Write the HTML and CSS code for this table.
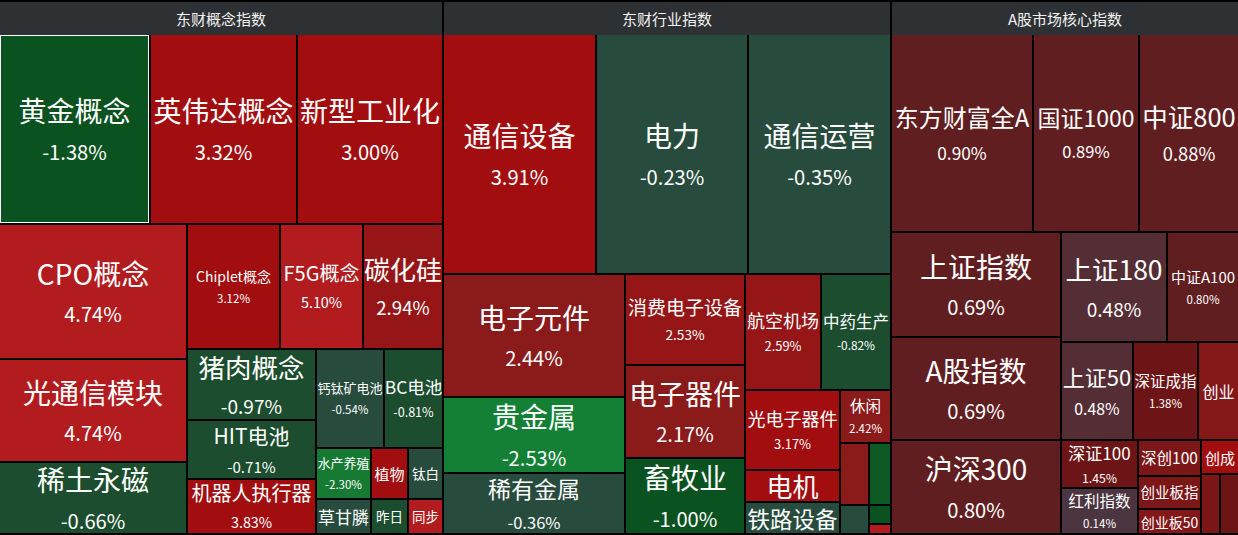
FILE: index.html
```html
<!DOCTYPE html>
<html lang="zh-CN">
<head>
<meta charset="utf-8">
<title>板块热力图</title>
<link rel="stylesheet" href="styles.css">
</head>
<body>
<div class="board">
  <section class="sec s1">
    <div class="hd">东财概念指数</div>
    <div class="col body">
      <div class="row" style="height:190px">
        <div class="t g1 sel" style="width:151px;font-size:28px"><div class="n">黄金概念</div><div class="p">-1.38%</div></div>
        <div class="t r1" style="width:147px;font-size:28px"><div class="n">英伟达概念</div><div class="p">3.32%</div></div>
        <div class="t r1 fill" style="font-size:28px"><div class="n">新型工业化</div><div class="p">3.00%</div></div>
      </div>
      <div class="row fill">
        <div class="col" style="width:188px">
          <div class="t r2" style="height:135px;font-size:28px"><div class="n">CPO概念</div><div class="p">4.74%</div></div>
          <div class="t r2" style="height:103px;font-size:28px"><div class="n">光通信模块</div><div class="p">4.74%</div></div>
          <div class="t g2 fill" style="font-size:28px"><div class="n">稀土永磁</div><div class="p">-0.66%</div></div>
        </div>
        <div class="col fill">
          <div class="row" style="height:125px">
            <div class="t r1" style="width:93px;font-size:14px"><div class="n">Chiplet概念</div><div class="p">3.12%</div></div>
            <div class="t r2" style="width:83px;font-size:20px"><div class="n">F5G概念</div><div class="p">5.10%</div></div>
            <div class="t r3 fill" style="font-size:26px"><div class="n">碳化硅</div><div class="p">2.94%</div></div>
          </div>
          <div class="row fill">
            <div class="col" style="width:129px">
              <div class="t g2" style="height:71px;font-size:26.5px"><div class="n">猪肉概念</div><div class="p">-0.97%</div></div>
              <div class="t g2" style="height:59px;font-size:21px"><div class="n">HIT电池</div><div class="p">-0.71%</div></div>
              <div class="t r1 fill" style="font-size:20px"><div class="n">机器人执行器</div><div class="p">3.83%</div></div>
            </div>
            <div class="col fill">
              <div class="row" style="height:99px">
                <div class="t g3" style="width:68px;font-size:13px"><div class="n">钙钛矿电池</div><div class="p">-0.54%</div></div>
                <div class="t g2 fill" style="font-size:17.5px"><div class="n">BC电池</div><div class="p">-0.81%</div></div>
              </div>
              <div class="row" style="height:51px">
                <div class="t g4" style="width:55px;font-size:13px"><div class="n">水产养殖</div><div class="p">-2.30%</div></div>
                <div class="t r1" style="width:37px;font-size:15px"><div class="n">植物</div></div>
                <div class="t g3 fill" style="font-size:13.5px"><div class="n">钛白</div></div>
              </div>
              <div class="row fill">
                <div class="t g3" style="width:55px;font-size:17px"><div class="n">草甘膦</div></div>
                <div class="t g2" style="width:37px;font-size:13.5px"><div class="n">昨日</div></div>
                <div class="t r2 fill" style="font-size:13.5px"><div class="n">同步</div></div>
              </div>
            </div>
          </div>
        </div>
      </div>
    </div>
  </section>

  <section class="sec s2">
    <div class="hd">东财行业指数</div>
    <div class="col body">
      <div class="row" style="height:240px">
        <div class="t r1" style="width:153px;font-size:28px"><div class="n">通信设备</div><div class="p">3.91%</div></div>
        <div class="t g3" style="width:152px;font-size:28px"><div class="n">电力</div><div class="p">-0.23%</div></div>
        <div class="t g3 fill" style="font-size:28px"><div class="n">通信运营</div><div class="p">-0.35%</div></div>
      </div>
      <div class="row fill">
        <div class="col" style="width:182px">
          <div class="t r4" style="height:123px;font-size:28px"><div class="n">电子元件</div><div class="p">2.44%</div></div>
          <div class="t g4b" style="height:76px;font-size:28px"><div class="n">贵金属</div><div class="p">-2.53%</div></div>
          <div class="t g3 fill" style="font-size:23px"><div class="n">稀有金属</div><div class="p">-0.36%</div></div>
        </div>
        <div class="col" style="width:120px">
          <div class="t r3" style="height:91px;font-size:19px"><div class="n">消费电子设备</div><div class="p">2.53%</div></div>
          <div class="t r4" style="height:93px;font-size:28px"><div class="n">电子器件</div><div class="p">2.17%</div></div>
          <div class="t g1 fill" style="font-size:28px"><div class="n">畜牧业</div><div class="p">-1.00%</div></div>
        </div>
        <div class="col fill">
          <div class="row" style="height:116px">
            <div class="t r3" style="width:76px;font-size:18px"><div class="n">航空机场</div><div class="p">2.59%</div></div>
            <div class="t g2 fill" style="font-size:16.5px"><div class="n">中药生产</div><div class="p">-0.82%</div></div>
          </div>
          <div class="row fill">
            <div class="col" style="width:95px">
              <div class="t r1" style="height:80px;font-size:18px"><div class="n">光电子器件</div><div class="p">3.17%</div></div>
              <div class="t r1" style="height:32px;font-size:26px"><div class="n">电机</div></div>
              <div class="t g3 fill" style="font-size:22.5px"><div class="n">铁路设备</div></div>
            </div>
            <div class="col fill">
              <div class="t r4" style="height:53px;font-size:15.5px"><div class="n">休闲</div><div class="p">2.42%</div></div>
              <div class="row fill">
                <div class="col" style="width:29px">
                  <div class="t r4" style="height:62px"></div>
                  <div class="t g3 fill"></div>
                </div>
                <div class="col fill">
                  <div class="t g5" style="height:62px"></div>
                  <div class="t g1" style="height:19px"></div>
                  <div class="t r2 fill"></div>
                </div>
              </div>
            </div>
          </div>
        </div>
      </div>
    </div>
  </section>

  <section class="sec s3">
    <div class="hd">A股市场核心指数</div>
    <div class="col body">
      <div class="row" style="height:198px">
        <div class="t m1" style="width:142px;font-size:24px"><div class="n">东方财富全A</div><div class="p">0.90%</div></div>
        <div class="t m1" style="width:106px;font-size:23px"><div class="n">国证1000</div><div class="p">0.89%</div></div>
        <div class="t m1 fill" style="font-size:25.5px"><div class="n">中证800</div><div class="p">0.88%</div></div>
      </div>
      <div class="row fill">
        <div class="col" style="width:170px">
          <div class="t m1" style="height:105px;font-size:28px"><div class="n">上证指数</div><div class="p">0.69%</div></div>
          <div class="t m1" style="height:103px;font-size:28px"><div class="n">A股指数</div><div class="p">0.69%</div></div>
          <div class="t m1 fill" style="font-size:28px"><div class="n">沪深300</div><div class="p">0.80%</div></div>
        </div>
        <div class="col fill">
          <div class="row" style="height:110px">
            <div class="t m2" style="width:106px;font-size:26.5px"><div class="n">上证180</div><div class="p">0.48%</div></div>
            <div class="t m1 fill" style="font-size:15px"><div class="n">中证A100</div><div class="p">0.80%</div></div>
          </div>
          <div class="row" style="height:98px">
            <div class="t m2" style="width:72px;font-size:22px"><div class="n">上证50</div><div class="p">0.48%</div></div>
            <div class="t m3" style="width:65px;font-size:15.5px"><div class="n">深证成指</div><div class="p">1.38%</div></div>
            <div class="t m6 fill" style="font-size:16px"><div class="n">创业</div></div>
          </div>
          <div class="row fill">
            <div class="col" style="width:77px">
              <div class="t m3" style="height:48px;font-size:17px"><div class="n">深证100</div><div class="p">1.45%</div></div>
              <div class="t m4 fill" style="font-size:15.5px"><div class="n">红利指数</div><div class="p">0.14%</div></div>
            </div>
            <div class="col" style="width:63px">
              <div class="t m5" style="height:36px;font-size:15.5px"><div class="n">深创100</div></div>
              <div class="t m5" style="height:33px;font-size:14.5px"><div class="n">创业板指</div></div>
              <div class="t m6 fill" style="font-size:14px"><div class="n">创业板50</div></div>
            </div>
            <div class="col fill">
              <div class="t r1" style="height:34px;font-size:15px"><div class="n">创成</div></div>
              <div class="row fill">
                <div class="t m5" style="width:19px"></div>
                <div class="t m3 fill"></div>
              </div>
            </div>
          </div>
        </div>
      </div>
    </div>
  </section>
</div>
</body>
</html>
```

FILE: styles.css
```css
html, body {
  margin: 0;
  padding: 0;
  background: #000;
  overflow: hidden;
}

body {
  font-family: "Noto Sans CJK SC", "Noto Sans", sans-serif;
  color: #fff;
}

.board {
  display: flex;
  width: 1240px;
  height: 535px;
}

.sec {
  display: flex;
  flex-direction: column;
  flex: none;
  height: 535px;
}

.s1 { width: 444px; }
.s2 { width: 448px; }
.s3 { width: 348px; }

.hd {
  flex: none;
  box-sizing: border-box;
  height: 35px;
  border-top: 2px solid #000;
  border-right: 2px solid #000;
  background: #2e3134;
  color: #f2f2f2;
  font-size: 15px;
  line-height: 33px;
  text-align: center;
  white-space: nowrap;
}

.body {
  flex: 1 1 0;
  min-height: 0;
}

.row {
  display: flex;
  flex-direction: row;
}

.col {
  display: flex;
  flex-direction: column;
}

.row > *, .col > * {
  flex: none;
}

.row > .fill, .col > .fill {
  flex: 1 1 0;
  min-width: 0;
  min-height: 0;
}

.t {
  box-sizing: border-box;
  border-right: 2px solid #000;
  border-bottom: 2px solid #000;
  display: flex;
  flex-direction: column;
  align-items: center;
  justify-content: center;
  white-space: nowrap;
  color: #fff;
}

.sel {
  box-shadow: inset 0 0 0 1px #fff;
}

.n {
  font-size: 1em;
  line-height: 1;
}

.p {
  font-size: max(0.72em, 11.5px);
  line-height: 1;
  margin-top: 0.86em;
}

/* reds */
.r1 { background: #a20e0f; }
.r2 { background: #b21c1f; }
.r3 { background: #961517; }
.r4 { background: #8b1a1b; }

/* greens */
.g1 { background: #0a5220; }
.g2 { background: #1b4d2e; }
.g3 { background: #274b3c; }
.g4 { background: #167a33; }
.g4b { background: #138036; }
.g5 { background: #0d5a24; }

/* index maroons */
.m1 { background: #611e21; }
.m2 { background: #552d34; }
.m3 { background: #6d1516; }
.m4 { background: #4b3540; }
.m5 { background: #7c1718; }
.m6 { background: #841819; }
```
